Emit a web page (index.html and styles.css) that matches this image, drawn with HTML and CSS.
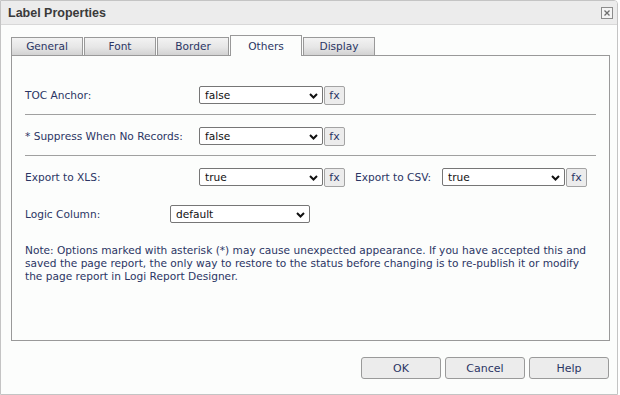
FILE: index.html
```html
<!DOCTYPE html>
<html lang="en">
<head>
  <meta charset="UTF-8">
  <title>Label Properties</title>
  <link rel="stylesheet" href="styles.css">
</head>
<body>
  <div class="dialog">
    <div class="titlebar">
      <span class="title">Label Properties</span>
      <span class="close">
        <svg width="12" height="12" viewBox="0 0 12 12">
          <rect x="0.5" y="0.5" width="11" height="11" fill="#f4f4f4" stroke="#8c8c8c"/>
          <path d="M3.5 3.5 L8.5 8.5 M8.5 3.5 L3.5 8.5" stroke="#6e6e6e" stroke-width="1.3"/>
        </svg>
      </span>
    </div>

    <div class="content">
      <div class="tabs">
        <div class="tab">General</div>
        <div class="tab">Font</div>
        <div class="tab">Border</div>
        <div class="tab active">Others</div>
        <div class="tab">Display</div>
      </div>

      <div class="panel">
        <div class="row first">
          <span class="lbl">TOC Anchor:</span>
          <div class="select">false<svg class="chev" width="9" height="6" viewBox="0 0 9 6"><path d="M1 1 L4.5 4.5 L8 1" fill="none" stroke="#111" stroke-width="2"/></svg></div>
          <button class="fx">fx</button>
        </div>
        <div class="sep"></div>
        <div class="row">
          <span class="lbl">* Suppress When No Records:</span>
          <div class="select">false<svg class="chev" width="9" height="6" viewBox="0 0 9 6"><path d="M1 1 L4.5 4.5 L8 1" fill="none" stroke="#111" stroke-width="2"/></svg></div>
          <button class="fx">fx</button>
        </div>
        <div class="sep"></div>
        <div class="row">
          <span class="lbl">Export to XLS:</span>
          <div class="select">true<svg class="chev" width="9" height="6" viewBox="0 0 9 6"><path d="M1 1 L4.5 4.5 L8 1" fill="none" stroke="#111" stroke-width="2"/></svg></div>
          <button class="fx">fx</button>
          <span class="lbl lbl-csv">Export to CSV:</span>
          <div class="select narrow">true<svg class="chev" width="9" height="6" viewBox="0 0 9 6"><path d="M1 1 L4.5 4.5 L8 1" fill="none" stroke="#111" stroke-width="2"/></svg></div>
          <button class="fx">fx</button>
        </div>
        <div class="row logic">
          <span class="lbl lbl-short">Logic Column:</span>
          <div class="select wide">default<svg class="chev" width="9" height="6" viewBox="0 0 9 6"><path d="M1 1 L4.5 4.5 L8 1" fill="none" stroke="#111" stroke-width="2"/></svg></div>
        </div>
        <p class="note">Note: Options marked with asterisk (*) may cause unexpected appearance. If you have accepted this and saved the page report, the only way to restore to the status before changing is to re-publish it or modify the page report in Logi Report Designer.</p>
      </div>

      <div class="footer">
        <button class="btn">OK</button>
        <button class="btn">Cancel</button>
        <button class="btn">Help</button>
      </div>
    </div>
  </div>
</body>
</html>
```

FILE: styles.css
```css
body {
  margin: 0;
  background: #ffffff;
  font-family: "DejaVu Sans", Verdana, sans-serif;
  font-size: 10.6px;
  color: #2b3564;
}
.dialog {
  width: 618px;
  height: 395px;
  box-sizing: border-box;
  border: 1px solid #c4c4c4;
  border-top-right-radius: 4px;
  background: #fcfdfc;
  overflow: hidden;
}
.titlebar {
  height: 23px;
  background: #ececec;
  border-bottom: 1px solid #d8d8d8;
  display: flex;
  align-items: center;
  justify-content: space-between;
  padding: 0 4px 0 7px;
}
.title {
  font-family: "Liberation Sans", Arial, sans-serif;
  font-weight: bold;
  font-size: 12.5px;
  color: #3a3a3a;
}
.close {
  display: flex;
  margin-top: 1px;
}
.content {
  padding: 10px 0 0 10px;
}
.tabs {
  display: flex;
  align-items: flex-end;
  gap: 1px;
  height: 20px;
}
.tab {
  width: 72px;
  height: 18px;
  box-sizing: border-box;
  border: 1px solid #999;
  border-bottom: none;
  background: linear-gradient(#f3f3f3, #e6e6e6 55%, #d2d2d2);
  text-align: center;
  line-height: 17px;
}
.tab.active {
  height: 21px;
  margin-bottom: -1px;
  background: #fcfdfc;
  line-height: 20px;
  position: relative;
  z-index: 1;
}
.panel {
  width: 599px;
  height: 286px;
  box-sizing: border-box;
  border: 1px solid #999;
  padding: 0 13px;
}
.row {
  display: flex;
  align-items: center;
  height: 20px;
  margin-top: 11px;
}
.row.first {
  margin-top: 29px;
}
.row.logic {
  margin-top: 17px;
}
.lbl {
  width: 174px;
  flex: none;
}
.lbl-csv {
  width: 87px;
  margin-left: 10px;
}
.lbl-short {
  width: 145px;
}
.select {
  width: 124px;
  height: 18px;
  box-sizing: border-box;
  border: 1px solid #767676;
  border-radius: 2px;
  background: #fff;
  color: #111;
  padding-left: 5px;
  line-height: 16px;
  display: flex;
  align-items: center;
  justify-content: space-between;
  padding-right: 4px;
  flex: none;
}
.select.narrow {
  width: 123px;
}
.select.wide {
  width: 140px;
}
.chev {
  margin-top: 1px;
}
.fx {
  width: 21px;
  height: 19px;
  margin-left: 1px;
  padding: 0;
  border: 1px solid #a3a3a3;
  border-radius: 2px;
  background: #ececec;
  color: #2b3564;
  font-family: inherit;
  font-size: 11px;
  flex: none;
}
.sep {
  height: 1px;
  background: #a0a0a0;
  margin-top: 9px;
}
.sep + .row {
  margin-top: 11px;
}
.note {
  margin: 20px 0 0;
  line-height: 13px;
}
.footer {
  display: flex;
  justify-content: flex-end;
  gap: 4px;
  padding: 16px 8px 0 0;
}
.btn {
  width: 80px;
  height: 22px;
  border: 1px solid #9a9a9a;
  border-radius: 3px;
  background: #ececec;
  color: #2b3564;
  font-family: inherit;
  font-size: 11px;
}
```
